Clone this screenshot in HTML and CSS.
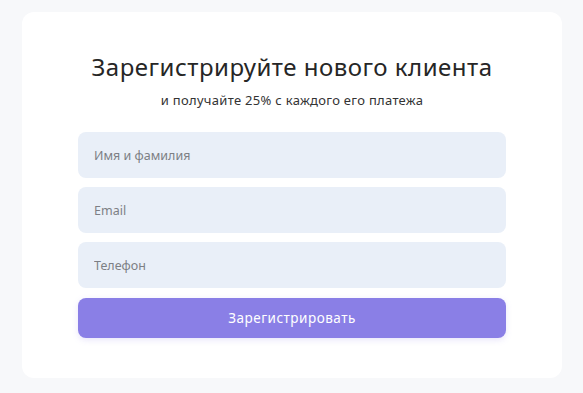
FILE: index.html
```html
<!DOCTYPE html>
<html>
<head>
<meta charset="utf-8">
<title>Регистрация клиента</title>
<link rel="stylesheet" href="styles.css">
</head>
<body>
<div class="card"> <!--registration form block-->
	<h1 class="title">Зарегистрируйте нового клиента</h1>
	<p class="subtitle">и получайте 25% с каждого его платежа</p>
	<form class="form">
		<input class="field" type="text" placeholder="Имя и фамилия">
		<input class="field" type="email" placeholder="Email">
		<input class="field" type="tel" placeholder="Телефон">
		<button class="submit" type="button">Зарегистрировать</button>
	</form>
</div>
</body>
</html>
```

FILE: styles.css
```css
body {
	margin: 0;
	background-color: #f7f8fa;
	font-family: "Noto Sans", "DejaVu Sans", sans-serif;
}
.card {
	margin: 12px 21px 0 22px;
	height: 366px;
	box-sizing: border-box;
	background-color: #ffffff;
	border-radius: 12px;
	padding-top: 40px;
	text-align: center;
}
.title {
	margin: 0;
	font-size: 24px;
	font-weight: 400;
	line-height: 30px;
	letter-spacing: 0.5px;
	color: #262626;
}
.subtitle {
	margin: 9px 0 0 0;
	font-size: 13px;
	line-height: 18px;
	letter-spacing: 0.3px;
	color: #333333;
}
.form {
	width: 428px;
	margin: 23px auto 0 auto;
	display: flex;
	flex-direction: column;
	gap: 9px;
}
.field {
	height: 46px;
	box-sizing: border-box;
	border: none;
	border-radius: 8px;
	background-color: #e9eff8;
	padding: 0 16px;
	font-family: inherit;
	font-size: 12.5px;
	color: #333333;
	outline: none;
}
.field::placeholder {
	color: #7d7f85;
}
.submit {
	height: 40px;
	margin-top: 1px;
	border: none;
	border-radius: 8px;
	background-color: #8a7fe6;
	color: #ffffff;
	font-family: inherit;
	font-size: 13.5px;
	font-weight: 400;
	letter-spacing: 0.5px;
	box-shadow: 0 2px 6px rgba(138, 127, 230, 0.2);
}
```
